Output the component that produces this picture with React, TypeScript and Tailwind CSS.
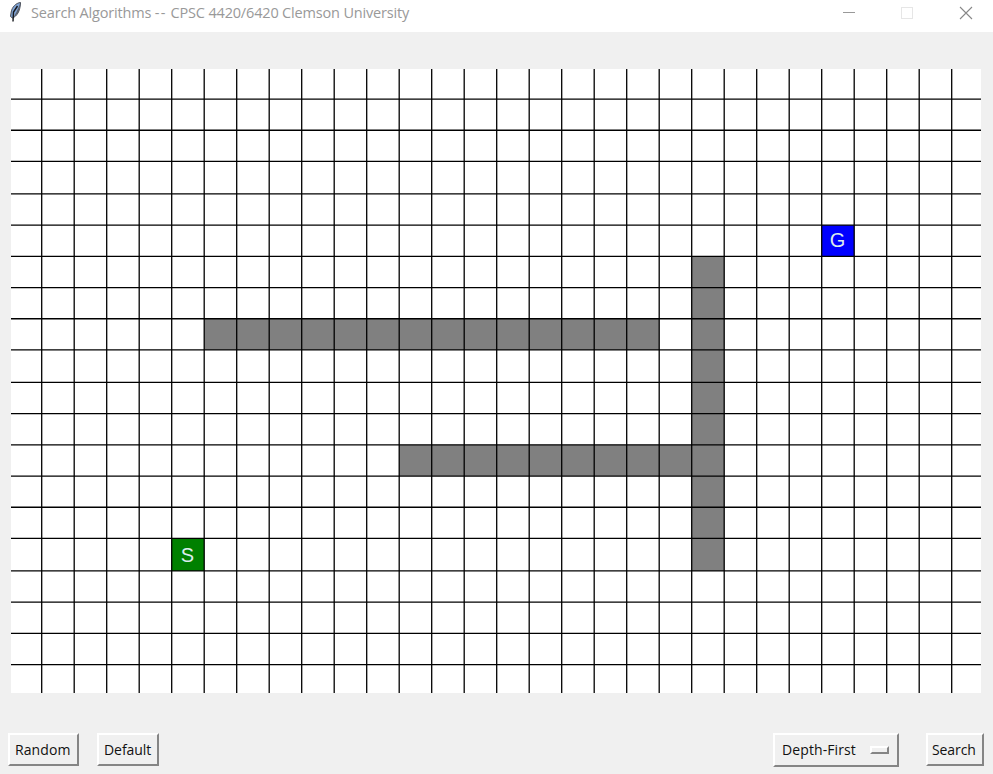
import { useState } from "react";

const COLS = Array.from({ length: 29 }, (_, i) => 30.7 + i * 32.5);
// Row lines sit on whole canvas units before the 1.3x display scale.
const ROWS = Array.from({ length: 19 }, (_, i) => 30.05 + Math.round(i * 24.17) * 1.3);
const colX = (c: number) => COLS[c - 1];
const rowY = (r: number) => ROWS[r - 1];

type Block = { col: number; row: number; w: number; h: number; fill: string };
const BLOCKS: Block[] = [
  { col: 6, row: 8, w: 14, h: 1, fill: "#808080" },
  { col: 12, row: 12, w: 9, h: 1, fill: "#808080" },
  { col: 21, row: 6, w: 1, h: 10, fill: "#808080" },
  { col: 5, row: 15, w: 1, h: 1, fill: "#008000" },
  { col: 25, row: 5, w: 1, h: 1, fill: "#0000ff" },
];

function Board() {
  return (
    <svg width="970" height="624" viewBox="0 0 970 624" className="block bg-white">
      {BLOCKS.map((b, i) => (
        <rect
          key={i}
          x={colX(b.col)}
          y={rowY(b.row)}
          width={b.w * 32.5}
          height={rowY(b.row + b.h) - rowY(b.row)}
          fill={b.fill}
        />
      ))}
      <g stroke="#000" strokeWidth="1.3">
        {COLS.map((x) => <line key={x} x1={x} x2={x} y1="0" y2="624" />)}
        {ROWS.map((y) => <line key={y} x1="0" x2="970" y1={y} y2={y} />)}
      </g>
      <g fill="#dcecec" textAnchor="middle" className="font-['Liberation_Sans',sans-serif] text-[20px]">
        <text x="176.500" y="493">S</text>
        <text x="826.500" y="178">G</text>
      </g>
    </svg>
  );
}

function Feather() {
  return (
    <svg width="14" height="20" viewBox="0 0 14 20" className="block">
      <path d="M12.500.5C8 1 4 5 3.200 10L2.500 14.500l2 1.500C9 14 12 9.500 12.500 1z" fill="#7fa3d4" stroke="#4a4e57" strokeWidth="1" />
      <path d="M12.300 1.500C12 8 9.500 12.500 5.500 15.500L8.500 10z" fill="#5c6069" />
      <path d="M9.500 4 5.500 10 5 19.500" fill="none" stroke="#15171c" strokeWidth="1.400" />
    </svg>
  );
}

const bevel = "border-2 border-t-white border-l-white border-r-[#858585] border-b-[#858585] outline-none bg-[#f0f0f0] flex items-center whitespace-nowrap";

export default function App() {
  const [algorithm] = useState("Depth-First");
  return (
    <div className="flex h-[774px] w-[993px] flex-col overflow-hidden bg-[#f0f0f0] font-['Open_Sans','Noto_Sans',sans-serif] text-black">
      <header className="flex h-8 shrink-0 items-start bg-white">
        <div className="ml-2 mt-[2px]"><Feather /></div>
        <h1 className="ml-[9px] mt-[3px] whitespace-nowrap text-[14.5px] leading-5 tracking-[-0.17px] text-[#999]">
          Search Algorithms <span className="tracking-[1.4px]">--</span> CPSC 4420/6420 Clemson University
        </h1>
        <svg width="150" height="26" viewBox="0 0 150 26" className="ml-auto block" fill="none">
          <path d="M0 12.500h12" stroke="#999" />
          <rect x="58.500" y="7.500" width="11" height="11" stroke="#e6e6e6" />
          <path d="m117 7 12 12m0-12-12 12" stroke="#888" strokeWidth="1.100" />
        </svg>
      </header>
      <main className="mt-[37px] pl-[11px]"><Board /></main>
      <footer className="mt-10 flex items-start pl-2 text-[14px] leading-5 text-[#111]">
        <button className={`${bevel} h-[33px] w-[71px] pl-[5px] tracking-[0.1px]`}>Random</button>
        <button className={`${bevel} ml-[18px] h-[33px] w-[62px] pl-[5px] tracking-[-0.05px]`}>Default</button>
        <button className={`${bevel} ml-auto h-[34px] w-[126px] justify-between pl-[7px] pr-2 tracking-[0.1px]`}>
          {algorithm}
          <span className="mb-px h-2 w-[19px] border-2 border-t-white border-l-white border-r-[#858585] border-b-[#858585]" />
        </button>
        <button className={`${bevel} ml-[27px] mr-[9px] h-[33px] w-[58px] pl-1 tracking-[-0.1px]`}>Search</button>
      </footer>
    </div>
  );
}
